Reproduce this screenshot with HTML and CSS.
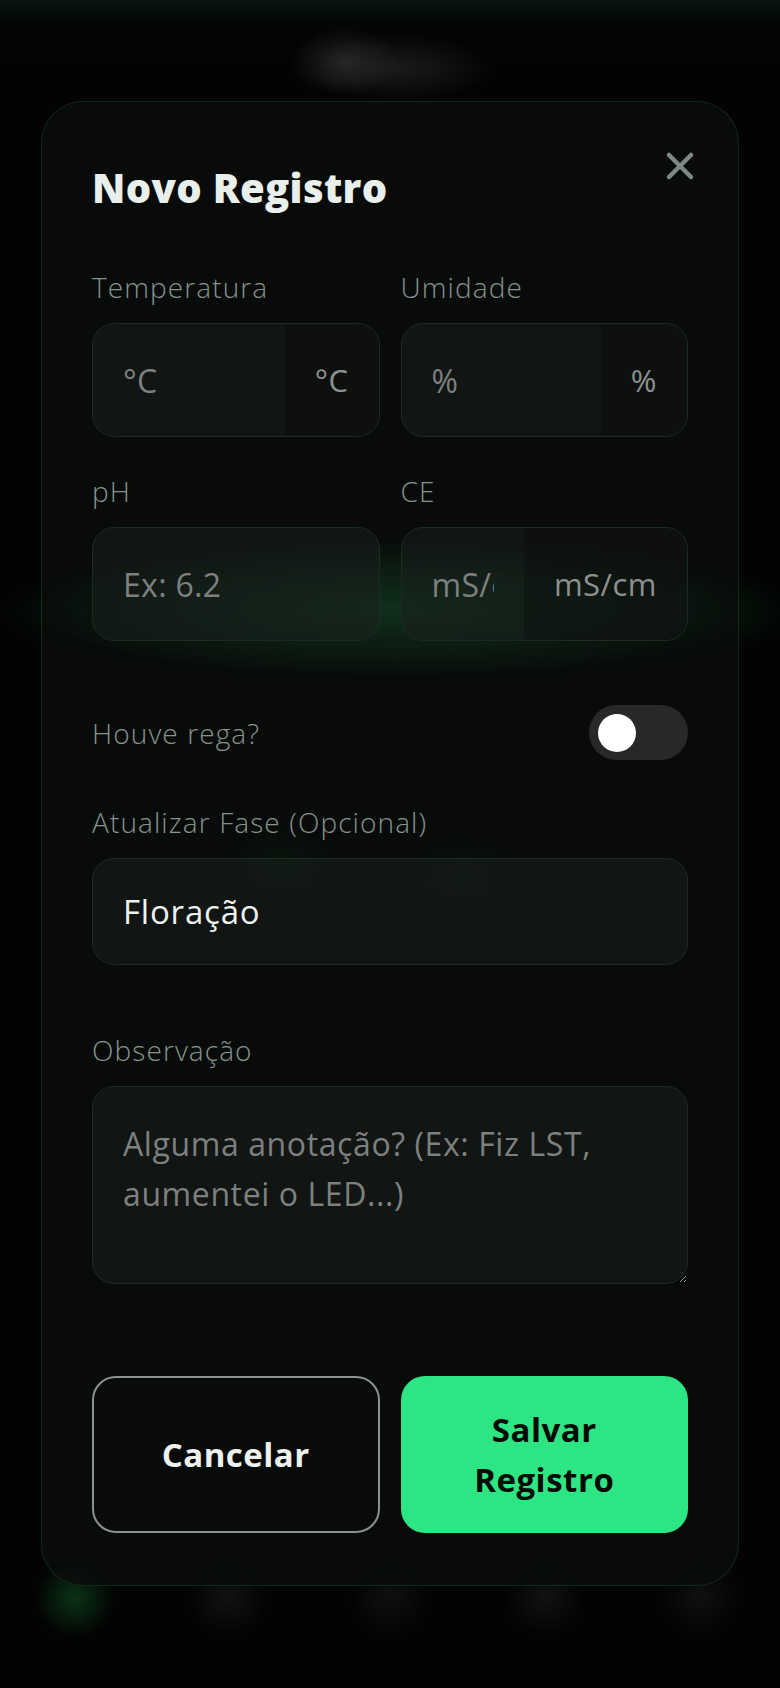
FILE: index.html
```
<!DOCTYPE html>
<html lang="pt-BR">
<head>
  <meta charset="UTF-8">
  <meta name="viewport" content="width=device-width, initial-scale=1.0">
  <title>Novo Registro</title>
  <link rel="stylesheet" href="styles.css">
</head>
<body>
  <div class="modal">
    <div class="modal-head">
      <h2>Novo Registro</h2>
      <button class="close" aria-label="Fechar">
        <svg width="30" height="30" viewBox="0 0 30 30"><path d="M4 4 L26 26 M26 4 L4 26" stroke="#7d8a83" stroke-width="4.5" stroke-linecap="round" fill="none"/></svg>
      </button>
    </div>

    <div class="row-two">
      <div class="field">
        <label>Temperatura</label>
        <div class="input-box">
          <input type="text" placeholder="°C">
          <span class="unit">°C</span>
        </div>
      </div>
      <div class="field">
        <label>Umidade</label>
        <div class="input-box">
          <input type="text" placeholder="%">
          <span class="unit">%</span>
        </div>
      </div>
    </div>

    <div class="row-two second">
      <div class="field">
        <label>pH</label>
        <div class="input-box">
          <input type="text" placeholder="Ex: 6.2">
        </div>
      </div>
      <div class="field">
        <label>CE</label>
        <div class="input-box">
          <input type="text" placeholder="mS/cm">
          <span class="unit">mS/cm</span>
        </div>
      </div>
    </div>

    <div class="toggle-row">
      <span class="toggle-label">Houve rega?</span>
      <div class="switch"><span class="knob"></span></div>
    </div>

    <div class="field phase">
      <label>Atualizar Fase (Opcional)</label>
      <select class="select-box">
        <option>Floração</option>
        <option>Vegetativo</option>
        <option>Germinação</option>
      </select>
    </div>

    <div class="field">
      <label>Observação</label>
      <textarea class="notes" placeholder="Alguma anotação? (Ex: Fiz LST, aumentei o LED...)"></textarea>
    </div>

    <div class="actions">
      <button class="btn btn-cancel">Cancelar</button>
      <button class="btn btn-save">Salvar Registro</button>
    </div>
  </div>
</body>
</html>
```

FILE: styles.css
```
body {
  margin: 0;
  min-height: 1688px;
  font-family: "Open Sans", "DejaVu Sans", sans-serif;
  color: #e8eee9;
  background-color: #020302;
  background-image:
    radial-gradient(ellipse 55px 34px at 345px 62px, rgba(55, 55, 55, 0.6), transparent),
    radial-gradient(ellipse 95px 34px at 400px 68px, rgba(45, 45, 45, 0.55), transparent),
    radial-gradient(ellipse 400px 70px at 400px 612px, rgba(26, 120, 60, 0.7), transparent),
    radial-gradient(circle 40px at 75px 1598px, rgba(20, 90, 40, 0.55), transparent),
    radial-gradient(circle 40px at 228px 1596px, rgba(45, 45, 45, 0.35), transparent),
    radial-gradient(circle 40px at 390px 1596px, rgba(45, 45, 45, 0.3), transparent),
    radial-gradient(circle 40px at 545px 1596px, rgba(45, 45, 45, 0.35), transparent),
    radial-gradient(circle 40px at 700px 1596px, rgba(45, 45, 45, 0.3), transparent),
    linear-gradient(to bottom, #07140d 0, #030604 24px, #020302 60px);
}
.modal {
  box-sizing: border-box;
  width: 698px;
  margin: 101px auto 0;
  padding: 62px 50px 52px;
  border-radius: 42px;
  border: 1px solid rgba(40, 105, 65, 0.3);
  background-color: rgba(10, 13, 11, 0.84);
  background-image:
    radial-gradient(ellipse 360px 70px at 50% 505px, rgba(28, 105, 58, 0.28), transparent),
    radial-gradient(ellipse 60px 40px at 240px 765px, rgba(28, 90, 50, 0.12), transparent),
    radial-gradient(ellipse 60px 40px at 420px 775px, rgba(28, 90, 50, 0.1), transparent);
}
.modal-head {
  display: flex;
  justify-content: space-between;
  align-items: flex-start;
  margin-bottom: 57px;
}
.modal-head h2 {
  margin: 0;
  font-size: 40px;
  line-height: 48px;
  font-weight: 800;
  color: #e9efeb;
  letter-spacing: 0.3px;
}
.close {
  width: 30px;
  height: 30px;
  padding: 0;
  margin: -13px -7px 0 0;
  border: none;
  background: none;
  cursor: pointer;
}
.close svg {
  display: block;
}
.row-two {
  display: grid;
  grid-template-columns: minmax(0, 1fr) minmax(0, 1fr);
  gap: 21px;
}
.row-two.second {
  margin-top: 36px;
}
.field label,
.toggle-label {
  display: block;
  font-size: 28px;
  line-height: 36px;
  font-weight: 300;
  letter-spacing: 1.1px;
  color: #86948c;
}
.field label {
  margin-bottom: 18px;
}
.input-box {
  display: flex;
  height: 114px;
  box-sizing: border-box;
  border: 1.5px solid #1a2c22;
  border-radius: 22px;
  background: rgba(26, 32, 29, 0.5);
  overflow: hidden;
}
.input-box input {
  flex: 1;
  width: 0;
  min-width: 0;
  padding: 0 30px;
  border: none;
  background: transparent;
  font-family: inherit;
  font-size: 32px;
  letter-spacing: 0.3px;
  color: #e8eee9;
  outline: none;
}
.input-box input::placeholder,
.notes::placeholder {
  color: #7d807e;
}
.unit {
  display: flex;
  align-items: center;
  padding: 0 30px;
  font-size: 31px;
  letter-spacing: 0.5px;
  color: #8c918e;
  background: rgba(0, 0, 0, 0.22);
}
.toggle-row {
  display: flex;
  justify-content: space-between;
  align-items: center;
  margin-top: 64px;
  height: 55px;
}
.switch {
  width: 99px;
  height: 55px;
  border-radius: 28px;
  background: #262928;
  display: flex;
  align-items: center;
  padding: 0 9px;
  box-sizing: border-box;
}
.knob {
  width: 38px;
  height: 38px;
  border-radius: 50%;
  background: #fff;
}
.phase {
  margin-top: 44px;
  margin-bottom: 67px;
}
.select-box {
  display: block;
  width: 100%;
  height: 107px;
  box-sizing: border-box;
  padding: 0 30px;
  border: 1.5px solid #1a2c22;
  border-radius: 22px;
  background: rgba(26, 32, 29, 0.5);
  appearance: none;
  -webkit-appearance: none;
  font-family: inherit;
  font-size: 33px;
  letter-spacing: 0.8px;
  font-weight: 500;
  color: #eef2ef;
  outline: none;
}
.notes {
  display: block;
  width: 100%;
  height: 198px;
  box-sizing: border-box;
  padding: 32px 30px;
  border: 1.5px solid #1a2c22;
  border-radius: 22px;
  background: rgba(26, 32, 29, 0.5);
  font-family: inherit;
  font-size: 32px;
  letter-spacing: 0.6px;
  line-height: 50px;
  color: #e8eee9;
  resize: vertical;
  outline: none;
}
.actions {
  display: grid;
  grid-template-columns: minmax(0, 1fr) minmax(0, 1fr);
  gap: 21px;
  margin-top: 92px;
}
.btn {
  display: flex;
  align-items: center;
  justify-content: center;
  min-height: 157px;
  padding: 0 36px;
  border-radius: 24px;
  font-family: inherit;
  font-size: 33px;
  line-height: 50px;
  letter-spacing: 0.5px;
  font-weight: 700;
  cursor: pointer;
}
.btn-cancel {
  background: transparent;
  border: 2px solid #8b928d;
  color: #eef2ef;
}
.btn-save {
  background: #2de683;
  border: none;
  color: #050a07;
}
```
